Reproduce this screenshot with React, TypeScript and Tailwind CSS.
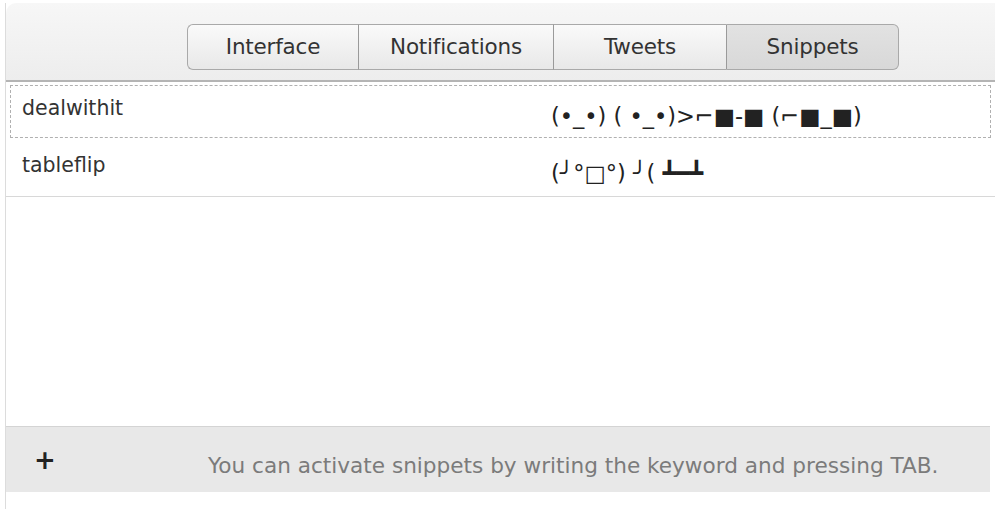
const tabs = ["Interface", "Notifications", "Tweets", "Snippets"];

const snippets = [
  { key: "dealwithit", value: "(•_•) ( •_•)>⌐■-■ (⌐■_■)", focused: true },
  { key: "tableflip", value: "(╯°□°) ╯( ┻━┻", focused: false },
];

export default function App() {
  return (
    <div
      className="w-[1000px] h-[509px] bg-white pl-[5px] pr-[5px] pt-[3px] flex flex-col overflow-hidden"
      style={{ fontFamily: '"DejaVu Sans", sans-serif' }}
    >
      <div className="flex-1 flex flex-col border-l border-[#dcdcdc]">
        <div className="h-[79px] rounded-tl-[10px] bg-gradient-to-b from-[#f7f7f7] to-[#ededed] border-b-2 border-[#b4b4b4] flex pl-[181px] pt-[21px]">
          <div className="flex h-[46px]">
            {tabs.map((t, i) => {
              const active = t === "Snippets";
              return (
                <div
                  key={t}
                  className={
                    "flex items-center justify-center border-y border-[#a9a9a9] text-[21.5px] text-[#333] -tracking-[0.2px] " +
                    (i === 0 ? "w-[171px] rounded-l-[6px] border-l " : "") +
                    (i === 1 ? "w-[195px] border-l border-l-[#9a9a9a] " : "") +
                    (i === 2 ? "w-[173px] border-l border-l-[#9a9a9a] " : "") +
                    (i === 3 ? "w-[173px] rounded-r-[6px] border-x border-l-[#9a9a9a] " : "") +
                    (active
                      ? "bg-gradient-to-b from-[#e2e2e2] to-[#d8d8d8]"
                      : "bg-gradient-to-b from-[#fafafa] to-[#e8e8e8]")
                  }
                >
                  {t}
                </div>
              );
            })}
          </div>
        </div>

        <div className="flex-1 bg-white flex flex-col pt-[3px]">
          {snippets.map((s) => (
            <div
              key={s.key}
              className={
                "flex h-[56px] " +
                (s.focused ? "" : "border-b border-[#d8d8d8]")
              }
            >
              <div
                className={
                  "flex-1 flex items-center " +
                  (s.focused
                    ? "border border-dashed border-[#b0b0b0] mb-[3px] mx-[4px] pl-[11px]"
                    : "pl-[16px]")
                }
              >
                <span className="w-[529px] text-[20.5px] text-[#333] -mt-[6px]">{s.key}</span>
                <span className="text-[22.5px] text-[#222] mt-[10px] whitespace-nowrap">{s.value}</span>
              </div>
            </div>
          ))}
        </div>

        <div className="h-[66px] bg-[#e8e8e8] border-t border-[#d4d4d4] flex items-center mr-[5px]">
          <span className="w-[202px] pl-[28px] text-[26px] font-bold text-[#222] mt-[2px]">+</span>
          <span className="text-[21.6px] text-[#7b7b7b] mt-[14px] whitespace-nowrap">
            You can activate snippets by writing the keyword and pressing TAB.
          </span>
        </div>
        <div className="h-[17px] bg-white" />
      </div>
    </div>
  );
}
